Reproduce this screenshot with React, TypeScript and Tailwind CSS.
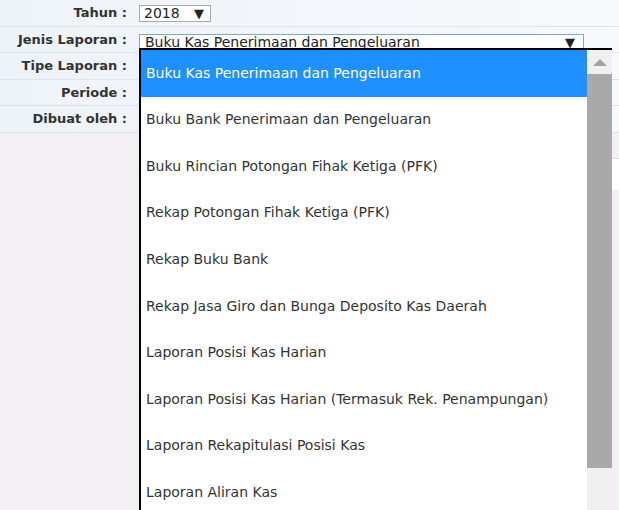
import React from "react";

const items = [
  "Buku Kas Penerimaan dan Pengeluaran",
  "Buku Bank Penerimaan dan Pengeluaran",
  "Buku Rincian Potongan Fihak Ketiga (PFK)",
  "Rekap Potongan Fihak Ketiga (PFK)",
  "Rekap Buku Bank",
  "Rekap Jasa Giro dan Bunga Deposito Kas Daerah",
  "Laporan Posisi Kas Harian",
  "Laporan Posisi Kas Harian (Termasuk Rek. Penampungan)",
  "Laporan Rekapitulasi Posisi Kas",
  "Laporan Aliran Kas",
];

function Row({ label, children, h }: { label: string; children?: React.ReactNode; h: string }) {
  return (
    <div className={`flex items-center border-b border-[#dfe4ea] bg-gradient-to-r from-[#eef3f8] to-[#f7f9fc] ${h}`}>
      <div className="w-[128px] pr-[1px] text-right font-bold text-[13px] text-[#333]">{label}</div>
      <div className="pl-[11px] flex items-center">{children}</div>
    </div>
  );
}

export default function App() {
  return (
    <div
      className="relative w-[619px] h-[510px] overflow-hidden bg-[#f3f0f3]"
      style={{ fontFamily: '"DejaVu Sans", Verdana, sans-serif' }}
    >
      <div className="flex flex-col">
        <Row label="Tahun :" h="h-[27px]">
          <div className="flex items-center justify-between w-[72px] h-[17px] border border-[#a9a9a9] bg-white pl-[4px] pr-[6px] text-[14px] text-[#222]">
            <span className="leading-none">2018</span>
            <span className="text-[13px] leading-none">▼</span>
          </div>
        </Row>
        <Row label="Jenis Laporan :" h="h-[26px]">
          <div className="flex items-center justify-between w-[445px] h-[17px] mt-[5px] border border-[#7aa7d6] bg-white pl-[5px] pr-[8px] text-[14px] text-[#222]">
            <span className="leading-none">Buku Kas Penerimaan dan Pengeluaran</span>
            <span className="text-[13px] leading-none">▼</span>
          </div>
        </Row>
        <Row label="Tipe Laporan :" h="h-[27px]" />
        <Row label="Periode :" h="h-[26px]" />
        <Row label="Dibuat oleh :" h="h-[27px]" />
      </div>

      {/* right-side white box under dropdown */}
      <div className="absolute left-[600px] top-[158px] w-[30px] h-[32px] bg-white border-t border-[#ddd]" />

      {/* dropdown list */}
      <div className="absolute left-[139px] top-[48px] w-[473px] h-[470px] bg-white border-t-2 border-l-2 border-black flex">
        <div className="flex-1 flex flex-col">
          {items.map((t, i) => (
            <div
              key={t}
              className={`h-[46.56px] shrink-0 flex items-center pl-[5px] text-[14px] ${
                i === 0 ? "bg-[#1e90ff] text-white" : "text-[#333]"
              }`}
            >
              {t}
            </div>
          ))}
        </div>
        <div className="w-[25px] bg-[#f0f0f0] flex flex-col items-center">
          <div className="h-[24px] flex items-center justify-center">
            <svg width="14" height="7" viewBox="0 0 14 7">
              <polygon points="0,7 7,0 14,7" fill="#a3a3a3" />
            </svg>
          </div>
          <div className="w-[25px] h-[394px] bg-[#a9a9a9]" />
        </div>
      </div>
    </div>
  );
}
